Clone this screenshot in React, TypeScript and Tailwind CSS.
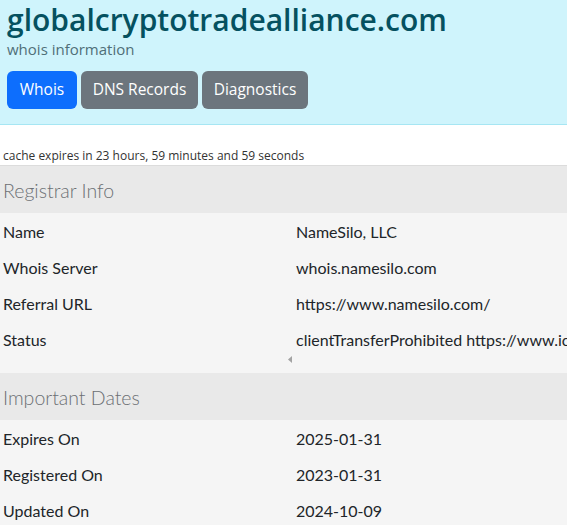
const registrar = [
  { label: 'Name', value: 'NameSilo, LLC' },
  { label: 'Whois Server', value: 'whois.namesilo.com' },
  { label: 'Referral URL', value: 'https://www.namesilo.com/' },
  { label: 'Status', value: 'clientTransferProhibited https://www.icann.org/epp#clientTransferProhibited' },
];

const dates = [
  { label: 'Expires On', value: '2025-01-31' },
  { label: 'Registered On', value: '2023-01-31' },
  { label: 'Updated On', value: '2024-10-09' },
];

function Row({ label, value }: { label: string; value: string }) {
  return (
    <div className="flex h-[36px] items-center whitespace-nowrap">
      <div className="w-[296px] shrink-0 pl-[3px]">{label}</div>
      <div>{value}</div>
    </div>
  );
}

function Section({ title, rows, scroll }: { title: string; rows: { label: string; value: string }[]; scroll?: boolean }) {
  return (
    <div>
      <div className="flex h-[47px] items-center bg-[#e9e9e9] pl-[3px] pt-[3px] font-['Lato',sans-serif] text-[19.5px] font-light text-[#6c7074]">{title}</div>
      <div className="overflow-hidden bg-[#f5f5f5] pt-[1px] font-['Lato',sans-serif] text-[16px] text-[#212529]">
        {rows.map((r) => (
          <Row key={r.label} label={r.label} value={r.value} />
        ))}
        {scroll && (
          <div className="flex h-[15px] items-start pl-[288px]">
            <svg width="5" height="7" viewBox="0 0 5 7" className="mt-[-2px]">
              <path d="M4 0 L0 3.5 L4 7 Z" fill="#a3a3a3" />
            </svg>
          </div>
        )}
      </div>
    </div>
  );
}

export default function App() {
  return (
    <div className="min-h-[525px] w-full overflow-hidden bg-white font-['Open_Sans',sans-serif]">
      <div className="border-b border-[#a6e6f3] bg-[#cff4fc] px-[7px] pb-[15px] pt-[1px]">
        <h1 className="whitespace-nowrap text-[30px] font-semibold leading-[38px] text-[#055160]">globalcryptotradealliance.com</h1>
        <div className="text-[15px] leading-[20px] text-[#4f6f78]">whois information</div>
        <div className="mt-[12px] flex gap-[4px] text-[15.5px]">
          <button className="h-[38px] w-[70px] rounded-[6px] bg-[#0d6efd] text-white">Whois</button>
          <button className="h-[38px] w-[117px] rounded-[6px] bg-[#6c757d] text-white">DNS Records</button>
          <button className="h-[38px] w-[106px] rounded-[6px] bg-[#6c757d] text-white">Diagnostics</button>
        </div>
      </div>
      <div className="pl-[3px] pt-[22px] text-[12px] leading-[18px] text-[#333]">cache expires in 23 hours, 59 minutes and 59 seconds</div>
      <div className="h-px bg-[#dcdcdc]" />
      <Section title="Registrar Info" rows={registrar} scroll />
      <Section title="Important Dates" rows={dates} />
    </div>
  );
}
